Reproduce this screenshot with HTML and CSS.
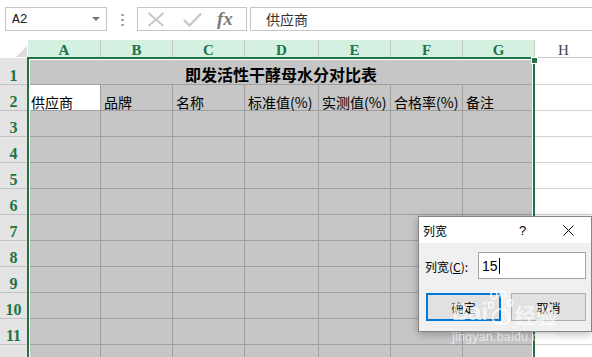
FILE: index.html
```html
<!DOCTYPE html>
<html lang="zh-CN">
<head>
<meta charset="utf-8">
<title>列宽</title>
<link rel="stylesheet" href="styles.css">
</head>
<body>
<div class="app">
  <div class="toolbar">
    <div class="namebox"><span class="ref">A2</span><span class="caret"></span></div>
    <div class="grip"><i></i><i></i><i></i></div>
    <div class="fxbox">
      <svg class="ico-x" width="18" height="15" viewBox="0 0 18 15"><path d="M1.5 1L16.5 14M16.5 1L1.5 14" stroke="#c8c8c8" stroke-width="2" fill="none"/></svg>
      <svg class="ico-ok" width="19" height="15" viewBox="0 0 19 15"><path d="M1 8L6.5 13.5L18 1.5" stroke="#c8c8c8" stroke-width="2.4" fill="none"/></svg>
      <span class="fx">fx</span>
    </div>
    <div class="formula">供应商</div>
  </div>

  <div class="sheet">
    <div class="corner"><span class="tri"></span></div>
    <div class="ch">A</div><div class="ch">B</div><div class="ch">C</div><div class="ch">D</div><div class="ch">E</div><div class="ch">F</div><div class="ch">G</div><div class="ch h">H</div>

    <div class="rh">1</div><div class="c title">即发活性干酵母水分对比表</div><div class="e"></div>

    <div class="rh">2</div><div class="c active">供应商</div><div class="c">品牌</div><div class="c">名称</div><div class="c">标准值(%)</div><div class="c">实测值(%)</div><div class="c">合格率(%)</div><div class="c">备注</div><div class="e"></div>

    <div class="rh">3</div><div class="c"></div><div class="c"></div><div class="c"></div><div class="c"></div><div class="c"></div><div class="c"></div><div class="c"></div><div class="e"></div>
    <div class="rh">4</div><div class="c"></div><div class="c"></div><div class="c"></div><div class="c"></div><div class="c"></div><div class="c"></div><div class="c"></div><div class="e"></div>
    <div class="rh">5</div><div class="c"></div><div class="c"></div><div class="c"></div><div class="c"></div><div class="c"></div><div class="c"></div><div class="c"></div><div class="e"></div>
    <div class="rh">6</div><div class="c"></div><div class="c"></div><div class="c"></div><div class="c"></div><div class="c"></div><div class="c"></div><div class="c"></div><div class="e"></div>
    <div class="rh">7</div><div class="c"></div><div class="c"></div><div class="c"></div><div class="c"></div><div class="c"></div><div class="c"></div><div class="c"></div><div class="e"></div>
    <div class="rh">8</div><div class="c"></div><div class="c"></div><div class="c"></div><div class="c"></div><div class="c"></div><div class="c"></div><div class="c"></div><div class="e"></div>
    <div class="rh">9</div><div class="c"></div><div class="c"></div><div class="c"></div><div class="c"></div><div class="c"></div><div class="c"></div><div class="c"></div><div class="e"></div>
    <div class="rh">10</div><div class="c"></div><div class="c"></div><div class="c"></div><div class="c"></div><div class="c"></div><div class="c"></div><div class="c"></div><div class="e"></div>
    <div class="rh">11</div><div class="c"></div><div class="c"></div><div class="c"></div><div class="c"></div><div class="c"></div><div class="c"></div><div class="c"></div><div class="e"></div>
    <div class="rh"></div><div class="c"></div><div class="c"></div><div class="c"></div><div class="c"></div><div class="c"></div><div class="c"></div><div class="c"></div><div class="e"></div>

    <div class="sel"></div>
    <div class="handle"></div>
  </div>

  <div class="dialog">
    <div class="dlg-title">
      <span class="dlg-name">列宽</span>
      <span class="dlg-help">?</span>
      <svg class="dlg-close" width="11" height="11" viewBox="0 0 11 11"><path d="M0.5 0.5L10.5 10.5M10.5 0.5L0.5 10.5" stroke="#000" stroke-width="1" fill="none"/></svg>
    </div>
    <div class="dlg-body">
      <div class="dlg-row">
        <span class="dlg-label">列宽(<u>C</u>):</span>
        <div class="dlg-input"><span>15</span><span class="cursor"></span></div>
      </div>
      <div class="dlg-buttons">
        <div class="btn primary">确定</div>
        <div class="btn">取消</div>
      </div>
    </div>
  </div>

  <div class="watermark">
    <div class="wm-logo">
      <span class="wm-bai">Bai</span>
      <svg class="wm-paw" width="26" height="36" viewBox="0 0 26 36">
        <g fill="none" stroke="rgba(255,255,255,0.7)" stroke-width="2">
          <ellipse cx="6" cy="5" rx="3" ry="4"/>
          <ellipse cx="15" cy="4" rx="3" ry="3.5"/>
          <ellipse cx="3" cy="15" rx="2.5" ry="3"/>
          <ellipse cx="22" cy="13" rx="2.5" ry="3"/>
          <path d="M5 30C3 24 9 19 13 19C18 19 23 25 21 31C19 35 8 35 5 30Z"/>
        </g>
      </svg>
      <span class="wm-jy">经验</span>
    </div>
    <div class="wm-url">jingyan.baidu.com</div>
  </div>
</div>
</body>
</html>
```

FILE: styles.css
```css
* { box-sizing: border-box; }

body {
  margin: 0;
  width: 592px;
  height: 357px;
  overflow: hidden;
  background: #fff;
  font-family: "Noto Sans CJK SC", sans-serif;
}

.app {
  position: relative;
  width: 592px;
  height: 357px;
  overflow: hidden;
}

/* ---------- formula toolbar ---------- */
.toolbar {
  height: 40px;
  display: flex;
  align-items: flex-start;
  padding-top: 7px;
}

.namebox {
  margin-left: 5px;
  width: 102px;
  height: 24px;
  border: 1px solid #c6c6c6;
  display: flex;
  align-items: center;
  justify-content: space-between;
  padding: 0 6px 0 6px;
  font-family: "Liberation Mono", monospace;
  font-size: 13px;
  color: #222;
}

.caret {
  width: 0;
  height: 0;
  border-left: 4px solid transparent;
  border-right: 4px solid transparent;
  border-top: 4px solid #7a7a7a;
}

.grip {
  margin-left: 14px;
  width: 3px;
  padding-top: 7px;
  display: flex;
  flex-direction: column;
  gap: 3px;
}

.grip i {
  display: block;
  width: 3px;
  height: 2px;
  background: #a8a8a8;
}

.fxbox {
  margin-left: 13px;
  width: 110px;
  height: 24px;
  border: 1px solid #c6c6c6;
  display: flex;
  align-items: center;
  padding-left: 9px;
}

.ico-ok { margin-left: 18px; }

.fx {
  margin-left: 15px;
  font-family: "Liberation Serif", serif;
  font-style: italic;
  font-weight: bold;
  font-size: 19px;
  line-height: 20px;
  color: #7a7a7a;
}

.formula {
  margin-left: 3px;
  flex: 1;
  height: 24px;
  border-top: 1px solid #c6c6c6;
  border-bottom: 1px solid #c6c6c6;
  border-left: 1px solid #c6c6c6;
  padding-left: 15px;
  font-size: 14px;
  line-height: 22px;
  color: #333;
}

/* ---------- sheet grid ---------- */
.sheet {
  position: relative;
  display: grid;
  grid-template-columns: 28px 73px 72px 72px 74px 72px 72px 72px 1fr;
  grid-template-rows: 18px 27px repeat(11, 26px);
}

.corner {
  background: #fff;
  display: flex;
  justify-content: flex-end;
  align-items: flex-end;
  padding: 0 1px 1px 0;
}

.tri {
  width: 0;
  height: 0;
  border-left: 11px solid transparent;
  border-bottom: 11px solid #dcdcdc;
}

.ch {
  background: #d3f0e0;
  border-right: 1px solid #bfcbc4;
  color: #217346;
  font-family: "Liberation Serif", serif;
  font-weight: bold;
  font-size: 15px;
  line-height: 15px;
  padding-top: 3px;
  text-align: center;
}

.ch.h {
  background: #fff;
  border-right: none;
  border-bottom: 1px solid #c6c6c6;
  color: #444;
  font-weight: normal;
}

.rh {
  background: #e4e4e4;
  border-bottom: 1px solid #c4c4c4;
  color: #217346;
  font-family: "Liberation Serif", serif;
  font-weight: bold;
  font-size: 16px;
  line-height: 16px;
  display: flex;
  justify-content: center;
  align-items: flex-end;
  padding-right: 1px;
}

.c {
  background: #c6c6c6;
  border-right: 1px solid #a0a0a0;
  border-bottom: 1px solid #a0a0a0;
  font-size: 14px;
  line-height: 16px;
  color: #000;
  padding-left: 3px;
  display: flex;
  align-items: flex-end;
  white-space: nowrap;
}

.c.title {
  grid-column: span 7;
  justify-content: center;
  font-weight: bold;
  font-size: 16px;
  line-height: 18px;
  padding-bottom: 1px;
  padding-left: 0;
}

.c.active { background: #fff; }

.e {
  background: #fff;
  border-bottom: 1px solid #d4d4d4;
}

.sel {
  position: absolute;
  left: 27px;
  top: 17px;
  width: 508px;
  height: 400px;
  border: 2px solid #217346;
  box-shadow: inset 0 0 0 1px #fff;
  pointer-events: none;
}

.handle {
  position: absolute;
  left: 531px;
  top: 17px;
  width: 7px;
  height: 7px;
  background: #217346;
  border: 1px solid #fff;
}

/* ---------- dialog ---------- */
.dialog {
  position: absolute;
  left: 418px;
  top: 216px;
  width: 174px;
  border: 1px solid #858585;
  background: #f0f0f0;
  box-shadow: 0 2px 8px rgba(0, 0, 0, 0.28);
  font-size: 12px;
  color: #000;
}

.dlg-title {
  height: 26px;
  background: #fff;
  display: flex;
  align-items: center;
  padding-left: 4px;
}

.dlg-name { flex: 1; }

.dlg-help {
  width: 7px;
  margin-right: 37px;
  font-family: "Liberation Sans", sans-serif;
  font-size: 13px;
}

.dlg-close { margin-right: 17px; }

.dlg-body {
  padding: 9px 5px 10px 6px;
}

.dlg-row {
  display: flex;
  align-items: center;
}

.dlg-label {
  flex: 1;
  padding-top: 1px;
}

.dlg-label u { text-underline-offset: 1px; }

.dlg-input {
  width: 108px;
  height: 27px;
  background: #fff;
  border: 1px solid #a3a3a3;
  display: flex;
  align-items: center;
  padding-left: 3px;
  font-family: "Liberation Sans", sans-serif;
  font-size: 14px;
}

.cursor {
  display: block;
  width: 1px;
  height: 16px;
  margin-left: 1px;
  background: #000;
}

.dlg-buttons {
  display: flex;
  gap: 10px;
  margin-top: 14px;
  padding-left: 1px;
}

.btn {
  width: 75px;
  height: 28px;
  background: #e1e1e1;
  border: 1px solid #adadad;
  display: flex;
  align-items: center;
  justify-content: center;
}

.btn.primary {
  border: 2px solid #0078d7;
}

/* ---------- watermark ---------- */
.watermark {
  position: absolute;
  left: 452px;
  top: 288px;
  pointer-events: none;
  color: rgba(255, 255, 255, 0.66);
}

.wm-logo {
  display: flex;
  align-items: flex-end;
  height: 38px;
}

.wm-bai {
  font-family: "Liberation Sans", sans-serif;
  font-weight: bold;
  font-size: 23px;
  line-height: 23px;
  padding-bottom: 2px;
}

.wm-jy {
  margin-left: 1px;
  font-size: 21px;
  line-height: 24px;
  font-weight: bold;
}

.wm-url {
  margin-top: 4px;
  font-family: "Liberation Sans", sans-serif;
  font-size: 12.5px;
  line-height: 14px;
  letter-spacing: 0.2px;
}
```
